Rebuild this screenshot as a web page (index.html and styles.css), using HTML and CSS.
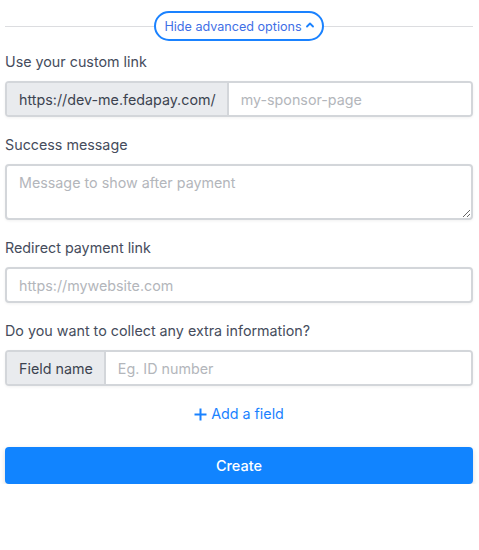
FILE: index.html
```html
<!DOCTYPE html>
<html>
<head>
<meta charset="utf-8">
<link rel="stylesheet" href="styles.css">
</head>
<body>
<div class="page">
  <div class="divider">
    <span class="line"></span>
    <button class="pill">Hide advanced options
      <svg class="chev" width="8" height="6" viewBox="0 0 8 6"><path d="M1 4.5 L4 1.5 L7 4.5" fill="none" stroke="#1a82ff" stroke-width="1.8" stroke-linecap="round" stroke-linejoin="round"/></svg>
    </button>
    <span class="line"></span>
  </div>

  <div class="group">
    <label class="label">Use your custom link</label>
    <div class="input-group">
      <span class="addon">https://dev-me.fedapay.com/</span>
      <input class="field" placeholder="my-sponsor-page">
    </div>
  </div>

  <div class="group">
    <label class="label">Success message</label>
    <textarea class="textarea" placeholder="Message to show after payment"></textarea>
  </div>

  <div class="group">
    <label class="label">Redirect payment link</label>
    <input class="field single" placeholder="https://mywebsite.com">
  </div>

  <div class="group">
    <label class="label">Do you want to collect any extra information?</label>
    <div class="input-group">
      <span class="addon">Field name</span>
      <input class="field" placeholder="Eg. ID number">
    </div>
  </div>

  <div class="add-row">
    <a class="add-link"><svg width="13" height="13" viewBox="0 0 13 13"><path d="M6.5 0.5 V12.5 M0.5 6.5 H12.5" stroke="#1a82ff" stroke-width="2"/></svg>Add a field</a>
  </div>

  <button class="create">Create</button>
</div>
</body>
</html>
```

FILE: styles.css
```css
* { box-sizing: border-box; }
html, body { margin: 0; padding: 0; background: #fff; }
body { font-family: Inter, "Noto Sans", sans-serif; color: #434a59; }
.page { padding: 11px 6px 0 5px; }

.divider { display: flex; align-items: center; height: 30px; margin-bottom: 11px; }
.line { flex: 1; height: 1px; background: #dcdde0; }
.pill {
  font-family: inherit; font-size: 12.6px; color: #3f6fe6;
  background: #fff; border: 2px solid #1a82ff; border-radius: 15px;
  height: 30px; padding: 0 8px 0 8px; display: flex; align-items: center; gap: 4px;
  cursor: pointer;
}
.chev { margin-top: -2px; }

.group { margin-bottom: 18px; }
.label { display: block; font-size: 14.3px; line-height: 20px; margin-bottom: 9px; color: #454c5c; }

.input-group { display: flex; height: 36px; border: 2px solid #d3d6da; border-radius: 4px; overflow: hidden; box-shadow: 0 1px 3px rgba(0,0,0,0.06); }
.addon { background: #e9ebee; border-right: 2px solid #d3d6da; padding: 0 11px 0 12px; display: flex; align-items: center; font-size: 14.3px; color: #3c4350; white-space: nowrap; }
.field { flex: 1; min-width: 0; border: none; outline: none; font-family: inherit; font-size: 14.3px; padding: 0 12px; color: #333; background: #fff; }
.field::placeholder, .textarea::placeholder { color: #b3b6bb; }
.field.single { width: 100%; height: 36px; border: 2px solid #d3d6da; border-radius: 4px; box-shadow: 0 1px 3px rgba(0,0,0,0.06); }

.textarea { display: block; width: 100%; height: 56px; border: 2px solid #d3d6da; border-radius: 4px; font-family: inherit; font-size: 14.3px; padding: 8px 12px; resize: vertical; outline: none; box-shadow: 0 1px 3px rgba(0,0,0,0.06); }

.add-row { display: flex; justify-content: center; margin-top: 15px; margin-bottom: 23px; }
.add-link { color: #1a82ff; font-size: 14.3px; display: flex; align-items: center; gap: 4px; line-height: 20px; cursor: pointer; }

.create { display: block; width: 100%; height: 37px; background: #1184ff; color: #fff; border: none; border-radius: 4px; font-family: inherit; font-size: 14.5px; font-weight: 500; box-shadow: 0 2px 5px rgba(0,0,0,0.15); cursor: pointer; }
```
